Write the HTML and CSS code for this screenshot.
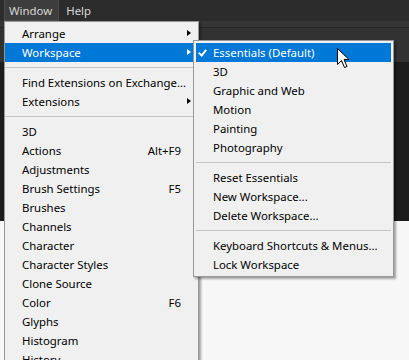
FILE: index.html
```html
<!DOCTYPE html>
<html lang="en">
<head>
    <meta charset="UTF-8">
    <title>Window menu</title>
    <link rel="stylesheet" href="styles.css">
</head>
<body>
    <div class="app">
        <div class="menubar">
            <span class="menubar-item active">Window</span>
            <span class="menubar-item">Help</span>
        </div>
        <div class="options-bar"></div>
        <div class="tool-strip"></div>
        <div class="canvas-area"></div>
        <div class="dialog-area"></div>

        <!-- Window menu -->
        <div class="menu main-menu">
            <div class="item sub">Arrange</div>
            <div class="item sub selected">Workspace</div>
            <div class="sep"></div>
            <div class="item">Find Extensions on Exchange...</div>
            <div class="item sub">Extensions</div>
            <div class="sep"></div>
            <div class="item">3D</div>
            <div class="item">Actions<span class="key">Alt+F9</span></div>
            <div class="item">Adjustments</div>
            <div class="item">Brush Settings<span class="key">F5</span></div>
            <div class="item">Brushes</div>
            <div class="item">Channels</div>
            <div class="item">Character</div>
            <div class="item">Character Styles</div>
            <div class="item">Clone Source</div>
            <div class="item">Color<span class="key">F6</span></div>
            <div class="item">Glyphs</div>
            <div class="item">Histogram</div>
            <div class="item">History</div>
        </div>

        <!-- Workspace submenu -->
        <div class="menu sub-menu">
            <div class="item checked selected">Essentials (Default)</div>
            <div class="item">3D</div>
            <div class="item">Graphic and Web</div>
            <div class="item">Motion</div>
            <div class="item">Painting</div>
            <div class="item">Photography</div>
            <div class="sep"></div>
            <div class="item">Reset Essentials</div>
            <div class="item">New Workspace...</div>
            <div class="item">Delete Workspace...</div>
            <div class="sep"></div>
            <div class="item">Keyboard Shortcuts &amp; Menus...</div>
            <div class="item">Lock Workspace</div>
        </div>

        <svg class="cursor" width="13" height="21" viewBox="0 0 13 21">
            <path d="M0.5 0.5 L0.5 16.5 L4.5 12.5 L7.5 19.5 L10 18.5 L7 11.5 L12 11.5 Z" fill="#fff" stroke="#000" stroke-width="1" stroke-linejoin="miter"/>
        </svg>
    </div>
</body>
</html>
```

FILE: styles.css
```css
body {
    margin: 0;
    font-family: 'Noto Sans', sans-serif;
    font-size: 11.4px;
}

.app {
    position: relative;
    width: 409px;
    height: 360px;
    overflow: hidden;
    display: flex;
    flex-direction: column;
    background-color: #f7f7f7;
}

.menubar {
    height: 21px;
    display: flex;
    align-items: stretch;
    padding-left: 4px;
    gap: 2px;
    background-color: #2c2c2c;
}

.menubar-item {
    display: flex;
    align-items: center;
    padding: 0 6px 0 4px;
    color: #d8d8d8;
    border: 1px solid transparent;
    border-top: none;
}

.menubar-item.active {
    background-color: #3d3d3d;
    border-color: #4c4c4c;
}

.options-bar {
    height: 6px;
    background-color: #353535;
    border-bottom: 1px solid #262626;
}

.tool-strip {
    height: 34px;
    background-color: #323232;
}

.canvas-area {
    height: 159px;
    background-color: #1c1c1c;
}

.dialog-area {
    flex: 1;
    background-color: #f7f7f7;
}

/* menus */
.menu {
    position: absolute;
    background-color: #f0f0f0;
    border: 1px solid #979797;
    box-shadow: 2px 2px 2px rgba(0, 0, 0, 0.35);
    color: #000;
}

.main-menu {
    left: 4px;
    top: 21px;
    width: 193px;
    padding: 2px 0 2px 0;
}

.sub-menu {
    left: 193px;
    top: 40px;
    width: 195px;
    padding: 2px;
}

.item {
    position: relative;
    height: 19px;
    line-height: 20px;
    padding-left: 17px;
    white-space: nowrap;
}

.item.selected {
    background-color: #0078d7;
    color: #fff;
}

.key {
    position: absolute;
    right: 17px;
    top: 0;
}

.item.sub::after {
    content: '';
    position: absolute;
    right: 7px;
    top: 6px;
    border-left: 4px solid #000;
    border-top: 3.5px solid transparent;
    border-bottom: 3.5px solid transparent;
}

.item.sub.selected::after {
    border-left-color: #fff;
}

.item.checked::before {
    content: '';
    position: absolute;
    left: 4px;
    top: 5px;
    width: 3px;
    height: 6px;
    border-right: 2px solid #fff;
    border-bottom: 2px solid #fff;
    transform: rotate(40deg);
}

.sep {
    height: 11px;
    display: flex;
    align-items: center;
}

.sep::before {
    content: '';
    flex: 1;
    height: 1px;
    background-color: #c4c4c4;
}

.cursor {
    position: absolute;
    left: 337px;
    top: 48px;
}
```
